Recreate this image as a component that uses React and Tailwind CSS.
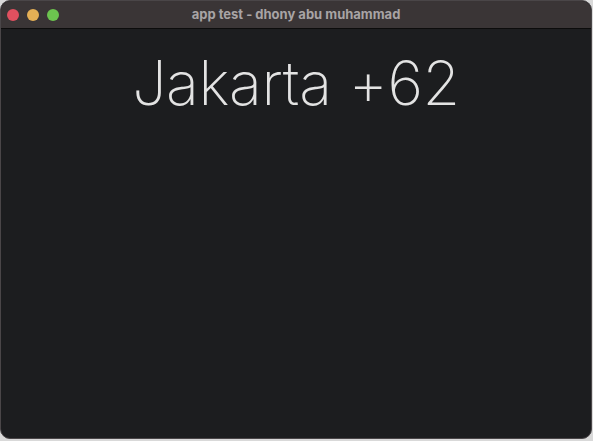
import React from 'react';

const App = () => {
  return (
    <div className="w-[593px] h-[441px] bg-[#d9d9d9] flex flex-col" style={{ fontFamily: 'Inter, "Noto Sans", sans-serif' }}>
      <div className="w-[592px] h-[439px] bg-[#1c1d1f] rounded-[10px] border border-[#4a4648] flex flex-col overflow-hidden">
        <div className="h-[28px] bg-[#3a3536] border-b border-[#0c0c0c] flex items-center relative shrink-0">
          <div className="flex items-center gap-[8px] pl-[6px]">
            <span className="w-[12px] h-[12px] rounded-full bg-[#e0505f]" />
            <span className="w-[12px] h-[12px] rounded-full bg-[#e5b055]" />
            <span className="w-[12px] h-[12px] rounded-full bg-[#6cc44f]" />
          </div>
          <p className="absolute inset-0 flex items-center justify-center text-[13px] font-bold text-[#a8a4a5]">
            app test - dhony abu muhammad
          </p>
        </div>
        <div className="flex-1 flex justify-center">
          <h1 className="mt-[13px] text-[61px] leading-[82px] font-extralight text-[#e3e3e3] tracking-[-0.4px]">
            Jakarta +62
          </h1>
        </div>
      </div>
    </div>
  );
};

export default App;
